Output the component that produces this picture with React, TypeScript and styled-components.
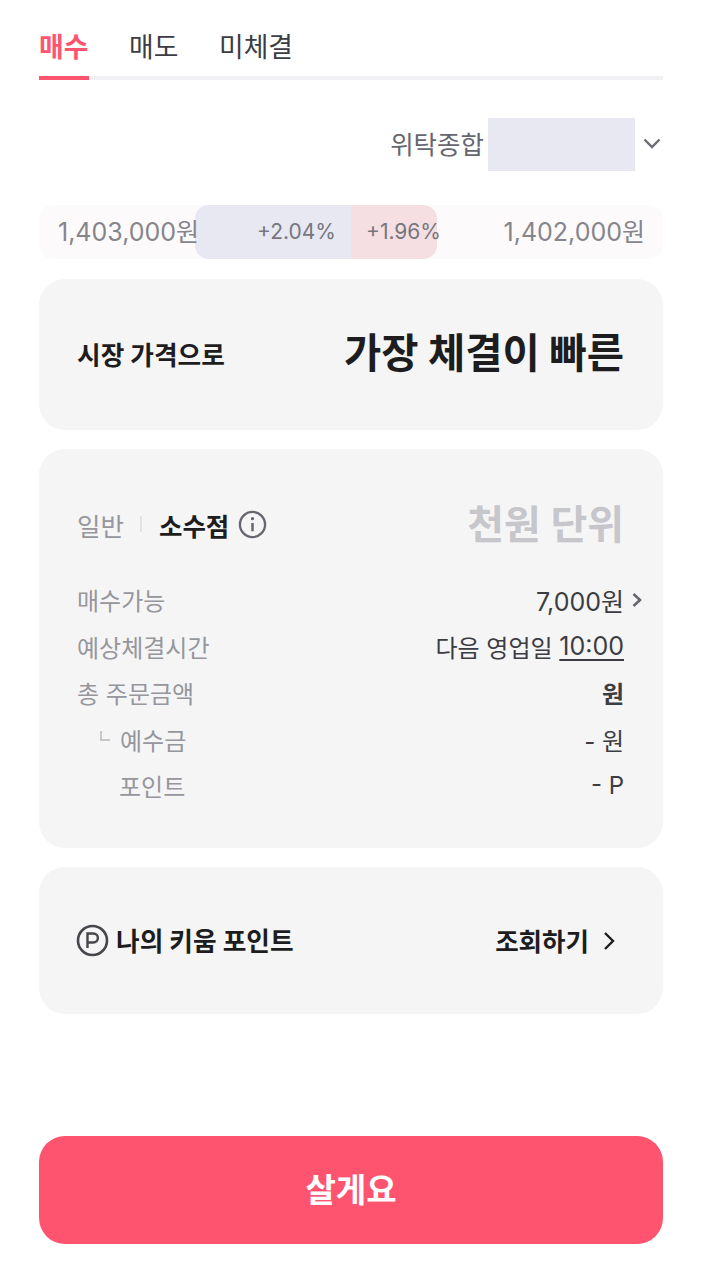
import * as React from 'react';
import styled, { createGlobalStyle } from 'styled-components';

const GlobalStyle = createGlobalStyle`
  html, body {
    margin: 0;
    padding: 0;
    background: #fff;
  }
  body {
    font-family: "Inter", "Noto Sans CJK KR", sans-serif;
    color: #1d1d20;
  }
`;

const Page = styled.div`
  width: 702px;
  height: 1280px;
  box-sizing: border-box;
  padding: 0 39px;
  display: flex;
  flex-direction: column;
  overflow: hidden;
`;

const Tabs = styled.div`
  height: 80px;
  box-sizing: border-box;
  display: flex;
  gap: 40px;
  border-bottom: 4px solid #f1f1f3;
`;

const Tab = styled.div<{ $active?: boolean }>`
  height: 80px;
  min-width: 50px;
  box-sizing: border-box;
  padding-top: 27px;
  font-size: 26.8px;
  line-height: 40px;
  font-weight: ${p => (p.$active ? 700 : 400)};
  color: ${p => (p.$active ? '#ff5470' : '#3c3c43')};
  border-bottom: 4px solid ${p => (p.$active ? '#ff5470' : 'transparent')};
`;

const AccountRow = styled.div`
  display: flex;
  justify-content: flex-end;
  align-items: center;
  margin-top: 38px;
  height: 53px;
`;

const AccountLabel = styled.span`
  font-size: 25.5px;
  color: #66666e;
  margin-bottom: 4px;
`;

const AccountMask = styled.div`
  width: 147px;
  height: 53px;
  margin-left: 4px;
  background: #e8e8f3;
`;

const Chevron = styled.svg`
  display: block;
  margin: 0 0 4px 6px;
`;

const PriceBar = styled.div`
  position: relative;
  margin-top: 34px;
  height: 54px;
  padding: 0 18px 0 19px;
  display: flex;
  justify-content: space-between;
  align-items: center;
  border-radius: 14px;
  background: #fdfafb;
  font-size: 25px;
  color: #85858c;
`;

const PriceText = styled.span`
  position: relative;
  z-index: 1;
  margin-bottom: 4px;
`;

const Spread = styled.div`
  position: absolute;
  top: 0;
  left: 156px;
  width: 242px;
  height: 54px;
  display: flex;
  font-size: 21px;
  color: #76767e;
`;

const SpreadSide = styled.div<{ $tone: 'ask' | 'bid' }>`
  box-sizing: border-box;
  height: 100%;
  padding-bottom: 2px;
  display: flex;
  align-items: center;
  justify-content: flex-end;
  width: ${p => (p.$tone === 'ask' ? 156 : 86)}px;
  padding-right: ${p => (p.$tone === 'ask' ? 15 : 0)}px;
  background: ${p => (p.$tone === 'ask' ? '#e8e8f3' : '#f5dfe2')};
  border-radius: ${p => (p.$tone === 'ask' ? '14px 0 0 14px' : '0 14px 14px 0')};
  white-space: nowrap;
`;

const BidText = styled.span`
  margin-right: -4px;
`;

const Card = styled.div<{ $height: number; $gap?: number }>`
  box-sizing: border-box;
  height: ${p => p.$height}px;
  margin-top: ${p => p.$gap ?? 19}px;
  padding: 0 39px;
  border-radius: 26px;
  background: #f5f5f6;
`;

const SplitRow = styled.div`
  height: 100%;
  display: flex;
  justify-content: space-between;
  align-items: center;
`;

const MarketLabel = styled.span`
  font-size: 25.7px;
  font-weight: 700;
  margin: 0 0 2px -1px;
`;

const MarketValue = styled.span`
  font-size: 40.5px;
  font-weight: 700;
  margin-bottom: 8px;
`;

const UnitHead = styled.div`
  display: flex;
  justify-content: space-between;
  align-items: center;
  padding-top: 45px;
  height: 60px;
  margin-bottom: 22.5px;
`;

const UnitTabs = styled.div`
  display: flex;
  align-items: center;
  margin-left: -1px;
`;

const UnitOption = styled.span<{ $active?: boolean }>`
  font-size: 25.5px;
  font-weight: ${p => (p.$active ? 700 : 400)};
  color: ${p => (p.$active ? '#1d1d20' : '#96969d')};
`;

const UnitDivider = styled.span`
  width: 2px;
  height: 16px;
  margin: 0 17px 0 16px;
  background: #e3e3e6;
`;

const InfoIcon = styled.svg`
  display: block;
  margin-left: 9px;
`;

const UnitValue = styled.span`
  font-size: 40px;
  font-weight: 700;
  color: #c6c6cb;
  margin-bottom: 4px;
`;

const InfoList = styled.div`
  display: flex;
  flex-direction: column;
`;

const InfoRow = styled.div`
  height: 46.5px;
  display: flex;
  justify-content: space-between;
  align-items: center;
  font-size: 24px;
`;

const InfoLabel = styled.span<{ $indent?: number }>`
  color: #96969d;
  margin-left: -1px;
  padding-left: ${p => p.$indent ?? 0}px;
  display: flex;
  align-items: center;
`;

const Corner = styled.span`
  width: 10px;
  height: 10px;
  margin: 0 10px 0 -20px;
  position: relative;
  top: -3px;
  box-sizing: border-box;
  border-left: 2px solid #c6c6cb;
  border-bottom: 2px solid #c6c6cb;
`;

const InfoValue = styled.span<{ $bold?: boolean }>`
  display: flex;
  align-items: center;
  color: #3c3c43;
  font-weight: ${p => (p.$bold ? 700 : 400)};
  white-space: pre;
`;

const Digits = styled.span`
  font-size: 25px;
`;

const Time = styled(Digits)`
  text-decoration: underline;
  text-underline-offset: 4px;
  text-decoration-thickness: 2px;
`;

const MoreArrow = styled.svg`
  display: block;
  margin: 0 -19px 0 7px;
`;

const PointTitle = styled.div`
  display: flex;
  align-items: center;
  gap: 7px;
  font-size: 25.7px;
  font-weight: 700;
  margin-left: -2px;
`;

const PointName = styled.span`
  margin-bottom: 3px;
`;

const PointLink = styled.div`
  display: flex;
  align-items: center;
  gap: 13px;
  font-size: 25.5px;
  font-weight: 700;
  padding-right: 8px;
`;

const PointAction = styled.span`
  margin-bottom: 3px;
`;

const BuyButton = styled.button`
  display: block;
  width: 100%;
  height: 108px;
  margin-top: 122px;
  padding: 0 0 4px;
  border: 0;
  border-radius: 26px;
  background: #ff5470;
  color: #fff;
  font-family: inherit;
  font-size: 33px;
  font-weight: 700;
`;

const App = () => (
  <>
    <GlobalStyle />
    <Page>
      <Tabs>
        <Tab $active>매수</Tab>
        <Tab>매도</Tab>
        <Tab>미체결</Tab>
      </Tabs>

      <AccountRow>
        <AccountLabel>위탁종합</AccountLabel>
        <AccountMask />
        <Chevron width="22" height="22" viewBox="0 0 22 22" fill="none" stroke="#6c6c73" strokeWidth="2.4">
          <path d="M3.5 7.5 L11 15 L18.5 7.5" />
        </Chevron>
      </AccountRow>

      <PriceBar>
        <PriceText>1,403,000원</PriceText>
        <PriceText>1,402,000원</PriceText>
        <Spread>
          <SpreadSide $tone="ask">+2.04%</SpreadSide>
          <SpreadSide $tone="bid">
            <BidText>+1.96%</BidText>
          </SpreadSide>
        </Spread>
      </PriceBar>

      <Card $height={151} $gap={20}>
        <SplitRow>
          <MarketLabel>시장 가격으로</MarketLabel>
          <MarketValue>가장 체결이 빠른</MarketValue>
        </SplitRow>
      </Card>

      <Card $height={399}>
        <UnitHead>
          <UnitTabs>
            <UnitOption>일반</UnitOption>
            <UnitDivider />
            <UnitOption $active>소수점</UnitOption>
            <InfoIcon width="29" height="29" viewBox="0 0 30 30" fill="none" stroke="#66666e">
              <circle cx="15" cy="15" r="13" strokeWidth="2.4" />
              <path d="M15 13.5 V22" strokeWidth="2.6" />
              <circle cx="15" cy="9" r="1.7" fill="#66666e" stroke="none" />
            </InfoIcon>
          </UnitTabs>
          <UnitValue>천원 단위</UnitValue>
        </UnitHead>
        <InfoList>
          <InfoRow>
            <InfoLabel>매수가능</InfoLabel>
            <InfoValue>
              <Digits>7,000원</Digits>
              <MoreArrow width="12" height="16" viewBox="0 0 12 16" fill="none" stroke="#66666e" strokeWidth="2.6">
                <path d="M2.5 2 L9 8 L2.5 14" />
              </MoreArrow>
            </InfoValue>
          </InfoRow>
          <InfoRow>
            <InfoLabel>예상체결시간</InfoLabel>
            <InfoValue>
              다음 영업일 <Time>10:00</Time>
            </InfoValue>
          </InfoRow>
          <InfoRow>
            <InfoLabel>총 주문금액</InfoLabel>
            <InfoValue $bold>원</InfoValue>
          </InfoRow>
          <InfoRow>
            <InfoLabel $indent={43}>
              <Corner />
              예수금
            </InfoLabel>
            <InfoValue>- 원</InfoValue>
          </InfoRow>
          <InfoRow>
            <InfoLabel $indent={42}>포인트</InfoLabel>
            <InfoValue>- P</InfoValue>
          </InfoRow>
        </InfoList>
      </Card>

      <Card $height={147}>
        <SplitRow>
          <PointTitle>
            <svg width="33" height="33" viewBox="0 0 33 33" fill="none" stroke="#46464c" strokeWidth="2.6">
              <circle cx="16.5" cy="16.5" r="14.5" />
              <path d="M11.5 24 V9.5 H17 C23.5 9.5 23.5 18.5 17 18.5 H11.5" strokeWidth="2.4" />
            </svg>
            <PointName>나의 키움 포인트</PointName>
          </PointTitle>
          <PointLink>
            <PointAction>조회하기</PointAction>
            <svg width="14" height="20" viewBox="0 0 14 20" fill="none" stroke="#1d1d20" strokeWidth="2.4">
              <path d="M3 2 L11 10 L3 18" />
            </svg>
          </PointLink>
        </SplitRow>
      </Card>

      <BuyButton>살게요</BuyButton>
    </Page>
  </>
);

export default App;
